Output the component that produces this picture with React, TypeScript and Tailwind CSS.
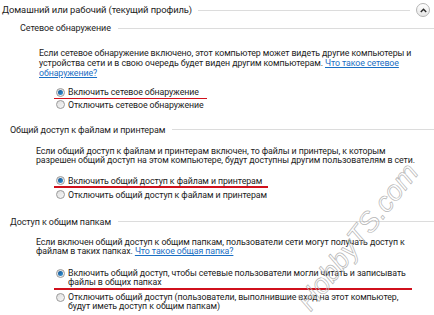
import { ReactNode } from 'react';

// Radio button drawn in the Windows 7 style
function Radio({ checked }: { checked?: boolean }) {
  return (
    <span className="mt-[0.5px] flex h-[9px] w-[9px] shrink-0 items-center justify-center rounded-full border border-[#9a9a9a] bg-gradient-to-br from-[#dedede] to-[#f8f8f8]">
      {checked && <span className="h-[5px] w-[5px] rounded-full bg-gradient-to-br from-[#0d4f8f] to-[#3d9ad9]" />}
    </span>
  );
}

function Option({ checked, children, mark, markWidth }: { checked?: boolean; children: ReactNode; mark?: boolean; markWidth?: string }) {
  return (
    <div className="relative flex items-start gap-[3px] pl-[56px]">
      <Radio checked={checked} />
      <span>{children}</span>
      {mark && <span className={`absolute left-[54px] bottom-[-2px] h-[1.5px] bg-[#d0101c] ${markWidth}`} />}
    </div>
  );
}

function Heading({ children, indent, mt }: { children: ReactNode; indent: string; mt: string }) {
  return (
    <div className={`flex h-[16px] items-center ${indent} ${mt}`}>
      <span className="text-[9px] tracking-[-0.1px] text-[#1e1e1e]">{children}</span>
      <span className="ml-[7px] h-px flex-1 bg-[#dcdcdc]" />
    </div>
  );
}

function Link({ children }: { children: ReactNode }) {
  return <span className="text-[#1a6fc4] underline">{children}</span>;
}

export default function App() {
  return (
    <div className="relative h-[315px] w-[434px] overflow-hidden bg-white font-['Roboto',sans-serif] text-[8.8px] leading-[10px] tracking-[-0.08px] text-[#222222]">
      {/* profile header */}
      <div className="flex h-[20px] items-center pl-[2px] pr-[4px]">
        <span className="text-[9.4px]">Домашний или рабочий (текущий профиль)</span>
        <span className="mx-[6px] h-px flex-1 bg-[#dcdcdc]" />
        <span className="flex h-[14px] w-[14px] items-center justify-center rounded-full border border-[#b4b4b4] bg-gradient-to-b from-[#ffffff] to-[#e6e6e6]">
          <svg width="7" height="5" viewBox="0 0 7 5">
            <path d="M0.8 4 L3.5 1.2 L6.2 4" fill="none" stroke="#2a2a2a" strokeWidth="1.4" />
          </svg>
        </span>
      </div>

      {/* network discovery */}
      <Heading indent="pl-[20px]" mt="mt-0">Сетевое обнаружение</Heading>
      <p className="mt-[12px] pl-[39px] pr-[20px]">
        Если сетевое обнаружение включено, этот компьютер может видеть другие компьютеры и устройства сети и в свою очередь будет виден другим компьютерам. <Link>Что такое сетевое обнаружение?</Link>
      </p>
      <div className="mt-[9px] flex flex-col gap-[2.5px]">
        <Option checked mark markWidth="w-[153px]">Включить сетевое обнаружение</Option>
        <Option>Отключить сетевое обнаружение</Option>
      </div>

      {/* file and printer sharing */}
      <Heading indent="pl-[10px]" mt="mt-[12px]">Общий доступ к файлам и принтерам</Heading>
      <p className="mt-[9px] pl-[36px] pr-[16px] leading-[9.5px]">
        Если общий доступ к файлам и принтерам включен, то файлы и принтеры, к которым разрешен общий доступ на этом компьютере, будут доступны другим пользователям в сети.
      </p>
      <div className="mt-[10px] flex flex-col gap-[4px]">
        <Option checked mark markWidth="w-[214px]">Включить общий доступ к файлам и принтерам</Option>
        <Option>Отключить общий доступ к файлам и принтерам</Option>
      </div>

      {/* public folders */}
      <Heading indent="pl-[10px]" mt="mt-[14px]">Доступ к общим папкам</Heading>
      <p className="mt-[8px] pl-[36px] pr-[16px] leading-[9.5px]">
        Если включен общий доступ к общим папкам, пользователи сети могут получать доступ к файлам в таких папках. <Link>Что такое общая папка?</Link>
      </p>
      <div className="mt-[12px] flex flex-col gap-[5px] pr-[22px] leading-[9.5px]">
        <Option checked mark markWidth="w-[358px]">Включить общий доступ, чтобы сетевые пользователи могли читать и записывать файлы в общих папках</Option>
        <Option>Отключить общий доступ (пользователи, выполнившие вход на этот компьютер, будут иметь доступ к общим папкам)</Option>
      </div>

      {/* watermark */}
      <span className="pointer-events-none absolute left-[358px] top-[237px] -translate-x-1/2 -translate-y-1/2 -rotate-[52deg] whitespace-nowrap font-['Liberation_Sans',sans-serif] text-[28px] italic leading-none tracking-normal text-transparent [-webkit-text-stroke:0.7px_#b5b5b5]">
        HobbyTS.com
      </span>
    </div>
  );
}
